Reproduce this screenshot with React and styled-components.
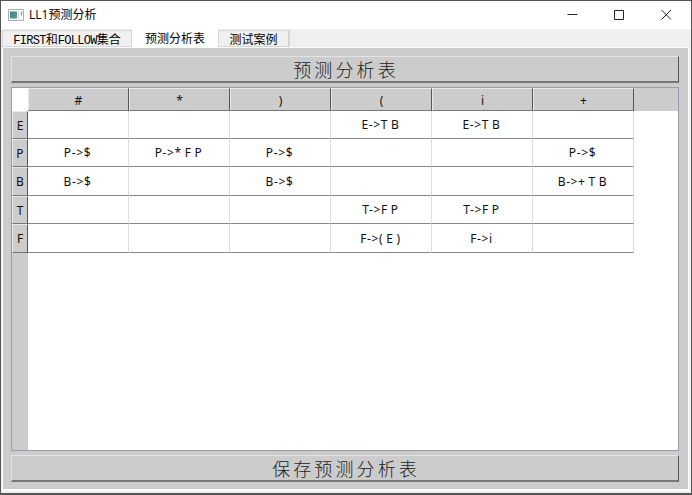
import React from 'react';
import styled, { createGlobalStyle } from 'styled-components';

const GlobalStyle = createGlobalStyle`
  * { box-sizing: border-box; }
  body { margin: 0; overflow: hidden; background: #fff; }
`;

const Window = styled.main`
  width: 692px;
  height: 495px;
  display: flex;
  flex-direction: column;
  background: #f0f0f0;
  border: 1px solid #555;
  border-bottom-width: 2px;
  color: #111;
  font-family: "Noto Sans CJK SC", sans-serif;
`;

const TitleBar = styled.header`
  height: 28px;
  flex: none;
  display: flex;
  align-items: center;
  padding-left: 7px;
  background: #fff;
`;

const Title = styled.h1`
  flex: 1;
  margin: 0 0 0 5px;
  font: 400 12px/28px "Open Sans", "Noto Sans CJK SC", sans-serif;
  color: #000;
  white-space: nowrap;
`;

const WindowControls = styled.div`
  display: flex;
  align-items: center;
  gap: 36px;
  padding: 0 19px 2px 0;
`;

const Control = styled.button`
  display: flex;
  width: 11px;
  height: 11px;
  padding: 0;
  border: 0;
  background: none;
`;

const TabBar = styled.nav`
  height: 18px;
  flex: none;
  display: flex;
  padding-left: 1px;
`;

const Tab = styled.button`
  display: flex;
  justify-content: center;
  align-items: baseline;
  width: ${({ $width }) => $width}px;
  height: ${({ $active }) => ($active ? 19 : 17)}px;
  margin-top: ${({ $active }) => ($active ? 0 : 1)}px;
  padding: 0;
  z-index: ${({ $active }) => ($active ? 1 : 0)};
  border: 1px solid ${({ $active }) => ($active ? '#fff' : '#d5d5d5')};
  border-right-width: ${({ $last }) => ($last ? 2 : 1)}px;
  background: ${({ $active }) => ($active ? '#fff' : '#f0f0f0')};
  color: #000;
  font: 400 12px/15px "Noto Sans CJK SC", sans-serif;
  white-space: nowrap;
`;

const Latin = styled.span`
  font-family: "Liberation Mono", monospace;
  font-size: 12px;
  line-height: 12px;
  letter-spacing: -0.7px;
`;

const Panel = styled.section`
  flex: 1;
  min-height: 0;
  display: flex;
  flex-direction: column;
  margin: 0 2px 2px 1px;
  padding: 8px 9px 7px 8px;
  border: solid #fbfbfb;
  border-width: 1px 1px 2px 1px;
  background: #ccc;
`;

const WideButton = styled.button`
  height: 27px;
  flex: none;
  padding: 0 0 0 2px;
  border: solid;
  border-width: 1px 1px 2px;
  border-color: #e3e3e3 #555 #777 #e3e3e3;
  background: #ccc;
  color: #222;
  font: 300 18px/25px "Noto Sans CJK SC", sans-serif;
  letter-spacing: 3.1px;
`;

const TableFrame = styled.div`
  flex: 1;
  min-height: 0;
  margin: 4px 0;
  border: 1px solid #9a9da5;
  background: linear-gradient(90deg, #ccc 16px, #fff 16px);
`;

const Row = styled.div`
  display: grid;
  grid-template-columns: 16px repeat(6, 101px) 1fr;
  grid-template-rows: 100%;
  height: ${({ $height }) => $height}px;
  font: 400 12px/${({ $height }) => ($height > 28 ? 29 : 27)}px "Noto Sans", "Noto Sans CJK SC", sans-serif;
`;

const Corner = styled.div`
  background: #fff;
`;

const HeaderCell = styled.div`
  border: solid;
  border-width: 1px;
  border-color: #e8e8e8 #555 #777 #e8e8e8;
  background: #ccc;
  line-height: ${({ $side }) => ($side ? 28 : 23)}px;
  text-align: center;
`;

const HeaderFill = styled.div`
  background: #ccc;
`;

const Cell = styled.div`
  padding-right: 1px;
  border-right: 1px solid #ddd;
  border-bottom: 1px solid #888;
  background: #fff;
  letter-spacing: 0.6px;
  word-spacing: -0.7px;
  text-align: center;
  white-space: nowrap;
`;

const terminals = ['#', '*', ')', '(', 'i', '+'];

const productions = [
  { name: 'E', height: 28, cells: ['', '', '', 'E->T B', 'E->T B', ''] },
  { name: 'P', height: 28, cells: ['P->$', 'P->* F P', 'P->$', '', '', 'P->$'] },
  { name: 'B', height: 29, cells: ['B->$', '', 'B->$', '', '', 'B->+ T B'] },
  { name: 'T', height: 28, cells: ['', '', '', 'T->F P', 'T->F P', ''] },
  { name: 'F', height: 29, cells: ['', '', '', 'F->( E )', 'F->i', ''] },
];

function AppIcon() {
  return (
    <svg width="16" height="13" viewBox="0 0 16 13">
      <defs>
        <linearGradient id="screen" x1="0" y1="0" x2="1" y2="1">
          <stop offset="0" stopColor="#4a78a0" />
          <stop offset="1" stopColor="#55a678" />
        </linearGradient>
      </defs>
      <path d="M.5.5h15v11H.5z" fill="#f5f7f7" stroke="#a9b0b3" />
      <path d="M2 2.5h7v7H2z" fill="url(#screen)" />
      <path d="M10 2.5h1v7h-1z" fill="#d5dadd" />
      <path d="M13 2.5h1v4h-1z" fill="#68a989" />
    </svg>
  );
}

function ControlIcon({ d }) {
  return (
    <svg width="11" height="11" viewBox="0 0 11 11" fill="none" stroke="#222">
      <path d={d} />
    </svg>
  );
}

export default function App() {
  return (
    <>
      <GlobalStyle />
      <Window>
        <TitleBar>
          <AppIcon />
          <Title>LL1预测分析</Title>
          <WindowControls>
            <Control aria-label="最小化"><ControlIcon d="M.5 5.5h10" /></Control>
            <Control aria-label="最大化"><ControlIcon d="M.5 1.5h9v9h-9z" /></Control>
            <Control aria-label="关闭"><ControlIcon d="M.5 1l9.5 9.5M10 1L.5 10.5" /></Control>
          </WindowControls>
        </TitleBar>
        <TabBar>
          <Tab $width={130}><Latin>FIRST</Latin>和<Latin>FOLLOW</Latin>集合</Tab>
          <Tab $width={86} $active>预测分析表</Tab>
          <Tab $width={72} $last>测试案例</Tab>
        </TabBar>
        <Panel>
          <WideButton>预测分析表</WideButton>
          <TableFrame>
            <Row $height={23}>
              <Corner />
              {terminals.map((t) => <HeaderCell key={t}>{t}</HeaderCell>)}
              <HeaderFill />
            </Row>
            {productions.map(({ name, height, cells }) => (
              <Row key={name} $height={height}>
                <HeaderCell $side>{name}</HeaderCell>
                {cells.map((text, i) => <Cell key={terminals[i]}>{text}</Cell>)}
              </Row>
            ))}
          </TableFrame>
          <WideButton>保存预测分析表</WideButton>
        </Panel>
      </Window>
    </>
  );
}
